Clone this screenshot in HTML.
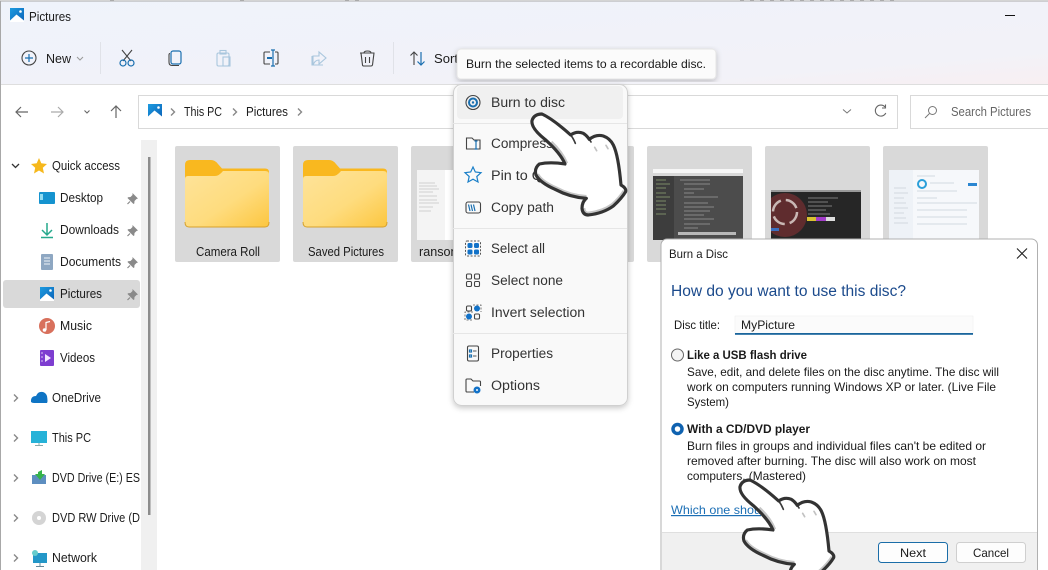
<!DOCTYPE html>
<html><head><meta charset="utf-8"><title>Pictures</title>
<style>
html,body{margin:0;padding:0;background:#fff;width:1048px;height:570px;overflow:hidden}
svg{display:block}
text{font-family:"Liberation Sans",sans-serif;font-size:12.5px;fill:#1c1c1c}
.m{font-size:13.5px;fill:#333}
.d{font-size:12px;fill:#1a1a1a}
.s{fill:none;stroke:#444;stroke-width:1.1}
.b{fill:none;stroke:#1a6fb0;stroke-width:1.2}
.f{fill:none;stroke:#a9c6dd;stroke-width:1.1}
.g{fill:none;stroke:#555;stroke-width:1.2}
</style></head><body>
<svg width="1048" height="570" viewBox="0 0 1048 570" xmlns="http://www.w3.org/2000/svg">
<defs>
<linearGradient id="tb" x1="0" y1="0" x2="1" y2="1"><stop offset="0" stop-color="#eff3fb"/><stop offset=".8" stop-color="#f2f2f8"/><stop offset="1" stop-color="#f8eff2"/></linearGradient>
<linearGradient id="fo" x1="0" y1="0" x2="1" y2="1"><stop offset="0" stop-color="#fee39a"/><stop offset=".55" stop-color="#fedc7e"/><stop offset="1" stop-color="#fcc63f"/></linearGradient>
<linearGradient id="pic" x1="0" y1="0" x2="1" y2="1"><stop offset="0" stop-color="#1c9be0"/><stop offset="1" stop-color="#0c63b8"/></linearGradient>
<g id="pi"><rect width="14" height="14" fill="url(#pic)"/><path d="M0 12.500 6.500 6.500 14 12.500V14H0Z" fill="#fff"/><circle cx="10.500" cy="3.500" r="1.300" fill="#fff"/></g>
<g id="folder"><path d="M0 5Q0 0 5 0H26Q30 0 33 4L37 8.500H80Q84 8.500 84 12V20H0Z" fill="#f9b81f"/><path d="M0 19Q0 16 3 16H30Q34 16 38 11H80Q84 11 84 14V62Q84 67 80 67H4Q0 67 0 62Z" fill="url(#fo)"/><path d="M0 62Q0 67 4 67H80Q84 67 84 62" fill="none" stroke="#d6a12d"/></g>
<g id="pin"><path d="M5.500 0 11 5.500 9.500 6 7.500 8 7.300 10.500 6.500 11 0.500 5 1 4.200 3.500 4 5.500 2Z" fill="#8a8a8a"/><path d="M3 8.500 0.500 11" stroke="#8a8a8a" stroke-width="1.200"/></g>
<path id="chev" d="M0 0 3.500 3.500 0 7" fill="none" stroke="#888" stroke-width="1.400"/>
<path id="hp" d="M36 62Q42 42 66 42Q100 58 152 105Q170 92 190 100Q200 106 208 118Q228 102 250 108Q270 115 280 135Q295 165 303 255Q320 265 317 275Q305 295 280 318Q250 340 205 345Q188 345 186 325Q186 305 199 295Q150 292 105 268Q60 248 48 225Q42 205 58 192Q90 185 135 192Q122 160 75 118Q33 85 36 62Z"/>
<clipPath id="hc"><use href="#hp"/></clipPath>
<g id="hand"><g transform="scale(.3333)">
<use href="#hp" fill="#fff"/>
<g clip-path="url(#hc)" fill="none" stroke="#c6c6c6" stroke-width="20">
<path d="M135 192Q122 160 90 130"/>
<path d="M48 225Q60 248 105 268Q150 292 199 295"/>
<path d="M186 325Q188 345 205 345Q250 340 280 318Q305 295 317 275"/>
</g>
<path d="M224 142 230 152M258 136 264 146" stroke="#c2c2c2" stroke-width="5" stroke-linecap="round"/>
<path d="M152 105Q160 115 166 130M208 118 213 126" fill="none" stroke="#3a3a3a" stroke-width="5" stroke-linecap="round"/>
<use href="#hp" fill="none" stroke="#333" stroke-width="9.500" stroke-linejoin="round"/>
</g></g>
<filter id="sh" x="-10%" y="-10%" width="120%" height="120%"><feDropShadow dx="0" dy="2" stdDeviation="3" flood-color="#000" flood-opacity=".22"/></filter>
<clipPath id="t5"><rect x="771" y="190" width="90" height="50"/></clipPath>
</defs>

<!-- page bg -->
<rect width="1048" height="570" fill="#fff"/>
<path d="M110 0h6M240 0h6M345 0h16M740 0h160" stroke="#aaa" stroke-width="1" stroke-dasharray="4 6"/>
<rect x="0" y="1" width="1048" height="83" fill="url(#tb)"/>
<rect x="0" y="0.500" width="1048" height="1" fill="#aaa"/>
<rect x="0" y="84" width="1048" height="1" fill="#dedede"/>
<rect x="0" y="1" width="1" height="569" fill="#a8a8a8"/>

<!-- title -->
<use href="#pi" x="10" y="8"/>
<text x="29" y="21" textLength="42" lengthAdjust="spacingAndGlyphs">Pictures</text>
<path d="M1005 15.500h10" stroke="#111" stroke-width="1"/>

<!-- toolbar -->
<circle cx="29" cy="58" r="7" class="s"/><path d="M29 54v8M25 58h8" class="b"/>
<text x="46" y="63" textLength="25" lengthAdjust="spacingAndGlyphs">New</text>
<path d="M77 57 80 60 83 57" fill="none" stroke="#999" stroke-width="1"/>
<rect x="100" y="42" width="1" height="32" fill="#e0e2e8"/>
<!-- cut -->
<path d="M122 50 131 61M132 50 123 61" class="s"/><circle cx="123" cy="63" r="3" class="b"/><circle cx="131" cy="63" r="3" class="b"/>
<!-- copy -->
<rect x="171" y="51" width="10" height="13" rx="2" fill="none" stroke="#1a6fb0" stroke-width="1.200"/><path d="M170 53.500Q169 53.500 169 55V62Q169 65.500 172 65.500H179" class="s"/>
<!-- paste -->
<rect x="217" y="53" width="12" height="13" rx="1.500" class="f"/><rect x="220" y="50.500" width="6" height="3.500" class="f"/><rect x="223" y="57" width="7" height="9" class="f"/>
<!-- rename -->
<path d="M270 52H265Q264 52 264 53V63Q264 64 265 64H270M275 52H277Q278 52 278 53V63Q278 64 277 64H275" class="s"/><path d="M267 58h5" stroke="#1a6fb0" stroke-width="2"/><path d="M273 50v16M271 50h4M271 66h4" class="b"/>
<!-- share -->
<path d="M313 56H319V52L326 58 319 64V60Q315 60 313 65ZM312 56V65H323" class="f"/>
<!-- delete -->
<path d="M361 53 362.500 65Q362.500 66 364 66H371Q372 66 372.500 65L374 53M360 53H374.500M364 53Q364 51 367.500 51Q371 51 371 53M365.500 57v6M369.500 57v6" class="s"/>
<rect x="393" y="42" width="1" height="32" fill="#e0e2e8"/>
<!-- sort -->
<path d="M414 65V52M410.500 55.500 414 52 417.500 55.500" class="s"/><path d="M421 52V65M417.500 61.500 421 65 424.500 61.500" class="b"/>
<text x="434" y="63" textLength="24" lengthAdjust="spacingAndGlyphs">Sort</text>

<!-- nav -->
<path d="M28 112H16M21 107 16 112 21 117" fill="none" stroke="#666" stroke-width="1.200"/>
<path d="M51 112H63M58 107 63 112 58 117" fill="none" stroke="#aaa" stroke-width="1.200"/>
<path d="M84.500 110.500 87 113 89.500 110.500" fill="none" stroke="#666" stroke-width="1.100"/>
<path d="M116 118V106M111 111 116 106 121 111" fill="none" stroke="#666" stroke-width="1.200"/>
<rect x="138.500" y="95.500" width="759" height="33" fill="#fff" stroke="#d9d9d9"/>
<use href="#pi" x="148" y="104"/>
<use href="#chev" x="171" y="108.500"/>
<text x="184" y="116" textLength="38" lengthAdjust="spacingAndGlyphs">This PC</text>
<use href="#chev" x="233" y="108.500"/>
<text x="246" y="116" textLength="42" lengthAdjust="spacingAndGlyphs">Pictures</text>
<use href="#chev" x="298" y="108.500"/>
<path d="M843 109.500 847 113 851 109.500" fill="none" stroke="#777" stroke-width="1"/>
<path d="M885 107A5.500 5.500 0 1 0 885.800 113M885.500 104.500V108H882" fill="none" stroke="#666" stroke-width="1.100"/>
<rect x="910.500" y="95.500" width="140" height="33" fill="#fff" stroke="#d9d9d9"/>
<circle cx="932.500" cy="110.500" r="4" fill="none" stroke="#777"/><path d="M929.500 113.500 925 118" stroke="#777"/>
<text x="951" y="116" textLength="80" lengthAdjust="spacingAndGlyphs" style="fill:#666">Search Pictures</text>

<!-- sidebar -->
<rect x="3" y="280" width="137" height="28" rx="3" fill="#d9d9d9"/>
<rect x="141" y="140" width="16" height="430" fill="#f0f0f0"/>
<rect x="148" y="157" width="2.500" height="358" fill="#8c8c8c"/>
<path d="M12 164 15.500 167.500 19 164" fill="none" stroke="#333" stroke-width="1.300"/>
<path d="M39 158 41.300 163.300 47 164 42.800 167.800 44 173.500 39 170.500 34 173.500 35.200 167.800 31 164 36.700 163.300Z" fill="#f6b81c"/>
<text x="52" y="170" textLength="68" lengthAdjust="spacingAndGlyphs">Quick access</text>
<!-- desktop -->
<rect x="39" y="192" width="16" height="12" rx="1" fill="#1593cf"/><rect x="40" y="194" width="3" height="6" fill="#8fdcf2"/>
<text x="60" y="202" textLength="43" lengthAdjust="spacingAndGlyphs">Desktop</text>
<use href="#pin" x="127" y="193"/>
<!-- downloads -->
<path d="M47 223V235M42 230 47 235 52 230" fill="none" stroke="#25a98c" stroke-width="1.500"/><path d="M41 237.500H53" stroke="#25a98c" stroke-width="1.500"/>
<text x="60" y="234" textLength="59" lengthAdjust="spacingAndGlyphs">Downloads</text>
<use href="#pin" x="127" y="225"/>
<!-- documents -->
<rect x="41" y="254" width="12" height="16" rx="1" fill="#8ea7c2"/><path d="M44 258h6M44 261h6M44 264h6" stroke="#eef3f8"/>
<text x="60" y="266" textLength="61" lengthAdjust="spacingAndGlyphs">Documents</text>
<use href="#pin" x="127" y="257"/>
<!-- pictures -->
<use href="#pi" x="40" y="287"/>
<text x="60" y="298" textLength="42" lengthAdjust="spacingAndGlyphs">Pictures</text>
<use href="#pin" x="127" y="289"/>
<!-- music -->
<circle cx="47" cy="326" r="8" fill="#d8705c"/><path d="M46 330V322.500L50 321.500" stroke="#fff" fill="none" stroke-width="1.200"/><circle cx="44.500" cy="330" r="1.800" fill="#fff"/>
<text x="60" y="330" textLength="32" lengthAdjust="spacingAndGlyphs">Music</text>
<!-- videos -->
<rect x="40" y="350" width="14" height="16" rx="1" fill="#7e3ed0"/><path d="M45 354 51 358 45 362Z" fill="#f3e6ff"/><path d="M42 352v12" stroke="#d8c2f2" stroke-dasharray="2 2"/>
<text x="60" y="362" textLength="35" lengthAdjust="spacingAndGlyphs">Videos</text>
<!-- onedrive -->
<use href="#chev" x="14" y="394.500"/>
<path d="M31 402Q30.500 396 36 396Q38 391 43 392Q46 393 47 396Q48 402 47 403H34Q32 403 31 402Z" fill="#0f74c4"/>
<text x="52" y="402" textLength="49" lengthAdjust="spacingAndGlyphs">OneDrive</text>
<!-- this pc -->
<use href="#chev" x="14" y="434.500"/>
<rect x="31" y="431" width="16" height="12" fill="#26b2d8"/><path d="M39 443v2M35 445.500h8" stroke="#8aa"/>
<text x="52" y="442" textLength="39" lengthAdjust="spacingAndGlyphs">This PC</text>
<!-- dvd -->
<use href="#chev" x="14" y="474.500"/>
<rect x="32" y="475" width="14" height="9" fill="#5d8ec0"/><path d="M38 472 42 470V474L45 474 40 480 35 474H38Z" fill="#35b34a"/>
<text x="52" y="482" textLength="88" lengthAdjust="spacingAndGlyphs">DVD Drive (E:) ES</text>
<use href="#chev" x="14" y="514.500"/>
<circle cx="39" cy="518" r="7" fill="#d4d4d4"/><circle cx="39" cy="518" r="2" fill="#fff"/>
<text x="52" y="522" textLength="88" lengthAdjust="spacingAndGlyphs">DVD RW Drive (D</text>
<use href="#chev" x="14" y="554.500"/>
<rect x="33" y="553" width="14" height="10" fill="#2397c8"/><circle cx="35" cy="553" r="3" fill="#6cc"/><path d="M40 563v3M36 566.500h8" stroke="#689"/>
<text x="52" y="562" textLength="45" lengthAdjust="spacingAndGlyphs">Network</text>

<!-- tiles -->
<g fill="#d9d9d9"><rect x="175" y="146" width="105" height="116" rx="2"/><rect x="293" y="146" width="105" height="116" rx="2"/><rect x="411" y="146" width="105" height="116" rx="2"/><rect x="529" y="146" width="105" height="116" rx="2"/><rect x="647" y="146" width="105" height="116" rx="2"/><rect x="765" y="146" width="105" height="116" rx="2"/><rect x="883" y="146" width="105" height="116" rx="2"/></g>
<use href="#folder" x="185" y="160"/>
<use href="#folder" x="303" y="160"/>
<text x="196" y="256" textLength="64" lengthAdjust="spacingAndGlyphs">Camera Roll</text>
<text x="308" y="256" textLength="76" lengthAdjust="spacingAndGlyphs">Saved Pictures</text>
<text x="419" y="256" textLength="42" lengthAdjust="spacingAndGlyphs">ransom</text>
<!-- thumb 3 -->
<rect x="417" y="170" width="99" height="70" fill="#f4f4f4"/><rect x="445" y="170" width="71" height="70" fill="#fff"/>
<path d="M419 183h16M419 186h18M419 189h20M419 192h14M419 196h18M419 200h18M419 203h20M419 207h14M419 211h12" stroke="#c4c4c4" stroke-width=".7"/>
<!-- thumb 4 -->
<rect x="653" y="169" width="90" height="71" fill="#4c4c4c"/><rect x="653" y="169" width="90" height="4" fill="#f6f6f6"/><rect x="653" y="173" width="90" height="3" fill="#d8d8d8"/><rect x="653" y="176" width="21" height="64" fill="#3d3d3d"/>
<path d="M656 180h10M656 184h14M656 188h10M656 193h10M656 197h14M656 201h10M656 205h10M656 209h10M656 214h10" stroke="#7c8a68" stroke-width="1"/>
<path d="M680 180h30M684 184h26M684 189h20M684 193h10M684 197h34M684 203h24M684 207h30M684 211h26M684 215h20M684 219h30M684 224h26M684 228h14M684 233h22" stroke="#9a9a9a" stroke-width=".8"/>
<rect x="678" y="232" width="58" height="3" fill="#b8b8b8"/>
<!-- thumb 5 -->
<rect x="771" y="190" width="90" height="50" fill="#262626"/><rect x="771" y="190" width="90" height="2" fill="#999"/>
<g clip-path="url(#t5)"><circle cx="785" cy="215" r="22" fill="#5f2c2e"/><circle cx="785" cy="212" r="12" fill="none" stroke="#c9b7b4" stroke-width="2.500" stroke-dasharray="14 5"/></g>
<path d="M808 198h30M808 202h20M808 206h24M808 210h18M808 214h22" stroke="#999" stroke-width=".8"/>
<rect x="807" y="217" width="28" height="4" fill="#d9c230"/><rect x="816" y="217" width="10" height="4" fill="#a33dc9"/><rect x="826" y="217" width="9" height="4" fill="#ddd"/>
<rect x="771" y="228" width="8" height="3" fill="#3a6fc0"/>
<!-- thumb 6 -->
<rect x="889" y="170" width="90" height="70" fill="#f6f8fb"/><rect x="889" y="170" width="24" height="70" fill="#eef2f7"/>
<circle cx="922" cy="184" r="4" fill="none" stroke="#2b9fd9" stroke-width="2"/><rect x="968" y="183" width="9" height="3" fill="#2b86d1"/>
<path d="M917 176h18M930 183h24M917 191h40M917 198h20M917 203h60M917 210h50M917 217h50M917 224h50M894 188h12M894 193h14M894 198h10M894 203h12M894 208h14M894 213h10M894 218h12M894 223h14" stroke="#c8d0d8" stroke-width=".8"/>

<!-- menu -->
<rect x="453.500" y="84.500" width="174" height="321" rx="8" fill="#f9f9f9" stroke="#d0d0d0" filter="url(#sh)"/>
<rect x="457" y="86" width="166" height="33" rx="4" fill="#f0f0f0"/>
<path d="M453 123.500H627M453 228.500H627M453 333.500H627" stroke="#e6e6e6"/>
<circle cx="473" cy="102.500" r="7" class="s"/><circle cx="473" cy="102.500" r="4" fill="none" stroke="#1a6fb0" stroke-width="2"/><circle cx="473" cy="102.500" r="1.200" fill="#1a6fb0"/>
<text class="m" x="491" y="107" textLength="74" lengthAdjust="spacingAndGlyphs">Burn to disc</text>
<path d="M466.500 148V138H472L474 140H480V149H466.500Z" class="s"/><path d="M476 141v8M474.500 141h3M474.500 149h3" class="b"/>
<text class="m" x="491" y="148" textLength="62" lengthAdjust="spacingAndGlyphs">Compress</text>
<path d="M473 167 475.300 172 481 172.700 476.800 176.500 478 182 473 179.200 468 182 469.200 176.500 465 172.700 470.700 172Z" fill="none" stroke="#1a7fc8" stroke-width="1.200"/>
<text class="m" x="491" y="180" textLength="52" lengthAdjust="spacingAndGlyphs">Pin to Q</text>
<rect x="466" y="202" width="14.500" height="11" rx="2" class="s"/><path d="M468.500 204.500 470 211M471 204.500 472.500 211M473.500 204.500 475 211" class="b" stroke-width="1"/>
<text class="m" x="491" y="212" textLength="63" lengthAdjust="spacingAndGlyphs">Copy path</text>
<rect x="465.500" y="241" width="15" height="15" rx="1.500" fill="none" stroke="#555" stroke-dasharray="2 1.500"/><g fill="#1272c8"><rect x="467.500" y="243" width="5" height="5" rx="1.500"/><rect x="474" y="243" width="5" height="5" rx="1.500"/><rect x="467.500" y="249.500" width="5" height="5" rx="1.500"/><rect x="474" y="249.500" width="5" height="5" rx="1.500"/></g>
<text class="m" x="491" y="253" textLength="54" lengthAdjust="spacingAndGlyphs">Select all</text>
<g class="s"><rect x="466.500" y="274" width="5" height="5" rx="1.200"/><rect x="474.500" y="274" width="5" height="5" rx="1.200"/><rect x="466.500" y="281.500" width="5" height="5" rx="1.200"/><rect x="474.500" y="281.500" width="5" height="5" rx="1.200"/></g>
<text class="m" x="491" y="285" textLength="72" lengthAdjust="spacingAndGlyphs">Select none</text>
<g class="s"><rect x="466.500" y="306" width="5" height="5" rx="1.200"/><rect x="474.500" y="314" width="5" height="5" rx="1.200"/></g><g fill="#1272c8"><circle cx="477" cy="308.500" r="3"/><circle cx="469" cy="316.500" r="3"/></g><path d="M473 305h8v7M473 312h-8v8h8" fill="none" stroke="#555" stroke-dasharray="2 1.500" stroke-width=".8"/>
<text class="m" x="491" y="317" textLength="94" lengthAdjust="spacingAndGlyphs">Invert selection</text>
<rect x="467.500" y="346" width="11" height="15" rx="1.500" class="s"/><rect x="469.500" y="350" width="2" height="2" class="b" stroke-width=".8"/><rect x="469.500" y="355" width="2" height="2" class="b" stroke-width=".8"/><path d="M473 351h3.500M473 356h3.500" stroke="#555"/>
<text class="m" x="491" y="358" textLength="62" lengthAdjust="spacingAndGlyphs">Properties</text>
<path d="M466 391V380Q466 379 467 379H471L473 381H479.500Q480.500 381 480.500 382V386M474 392H467Q466 392 466 391" class="s"/><circle cx="477" cy="390" r="3.500" fill="#1272c8"/><circle cx="477" cy="390" r="1" fill="#f9f9f9"/>
<text class="m" x="491" y="390" textLength="49" lengthAdjust="spacingAndGlyphs">Options</text>

<!-- tooltip -->
<rect x="457" y="49" width="259" height="30" rx="4" fill="#fbfbfb" stroke="#e6e6e6" filter="url(#sh)"/>
<text x="466" y="68" class="d" textLength="240" lengthAdjust="spacingAndGlyphs">Burn the selected items to a recordable disc.</text>

<!-- hand 1 -->
<use href="#hand" x="520" y="100"/>

<!-- dialog -->
<rect x="661" y="239" width="376.500" height="340" rx="6" fill="#fff" stroke="#b0b0b0"/>
<rect x="662" y="532" width="375" height="38" fill="#f0f0f0"/><rect x="662" y="532" width="375" height="1" fill="#dfdfdf"/>
<text x="669" y="258" class="d" textLength="59" lengthAdjust="spacingAndGlyphs">Burn a Disc</text>
<path d="M1017 248.500 1027 258.500M1027 248.500 1017 258.500" stroke="#222" stroke-width="1.100"/>
<text x="671" y="296" textLength="235" lengthAdjust="spacingAndGlyphs" style="font-size:15.500px;fill:#1b4a8c">How do you want to use this disc?</text>
<text x="674" y="329" class="d" textLength="46" lengthAdjust="spacingAndGlyphs">Disc title:</text>
<rect x="735" y="316" width="238" height="18" fill="#fbfbfb" stroke="#eee" stroke-width=".5"/><rect x="735" y="333" width="238" height="1.800" fill="#1a659c"/>
<text x="741" y="329" class="d" textLength="54" lengthAdjust="spacingAndGlyphs">MyPicture</text>
<circle cx="677.500" cy="355" r="6" fill="#f4f4f4" stroke="#666" stroke-width="1"/>
<text x="687" y="359" class="d" textLength="120" lengthAdjust="spacingAndGlyphs" style="font-weight:bold">Like a USB flash drive</text>
<text x="687" y="376" class="d" textLength="312" lengthAdjust="spacingAndGlyphs">Save, edit, and delete files on the disc anytime. The disc will</text>
<text x="687" y="391" class="d" textLength="309" lengthAdjust="spacingAndGlyphs">work on computers running Windows XP or later. (Live File</text>
<text x="687" y="406" class="d" textLength="42" lengthAdjust="spacingAndGlyphs">System)</text>
<circle cx="677.500" cy="429" r="4.500" fill="#fff" stroke="#0f62b0" stroke-width="3.500"/>
<text x="687" y="433" class="d" textLength="123" lengthAdjust="spacingAndGlyphs" style="font-weight:bold">With a CD/DVD player</text>
<text x="687" y="450" class="d" textLength="299" lengthAdjust="spacingAndGlyphs">Burn files in groups and individual files can't be edited or</text>
<text x="687" y="465" class="d" textLength="289" lengthAdjust="spacingAndGlyphs">removed after burning. The disc will also work on most</text>
<text x="687" y="480" class="d" textLength="119" lengthAdjust="spacingAndGlyphs">computers. (Mastered)</text>
<text x="671" y="514" class="d" textLength="90" lengthAdjust="spacingAndGlyphs" style="fill:#1c6fb5;text-decoration:underline">Which one shou</text>
<rect x="878.500" y="542.500" width="69" height="20" rx="3" fill="#fdfdfd" stroke="#1a6da8"/>
<text x="913" y="557" class="d" text-anchor="middle" textLength="26" lengthAdjust="spacingAndGlyphs">Next</text>
<rect x="956.500" y="542.500" width="69" height="20" rx="3" fill="#fdfdfd" stroke="#cfcfcf"/>
<text x="991" y="557" class="d" text-anchor="middle" textLength="36" lengthAdjust="spacingAndGlyphs">Cancel</text>

<!-- hand 2 -->
<use href="#hand" x="728" y="466"/>
</svg>
</body></html>
